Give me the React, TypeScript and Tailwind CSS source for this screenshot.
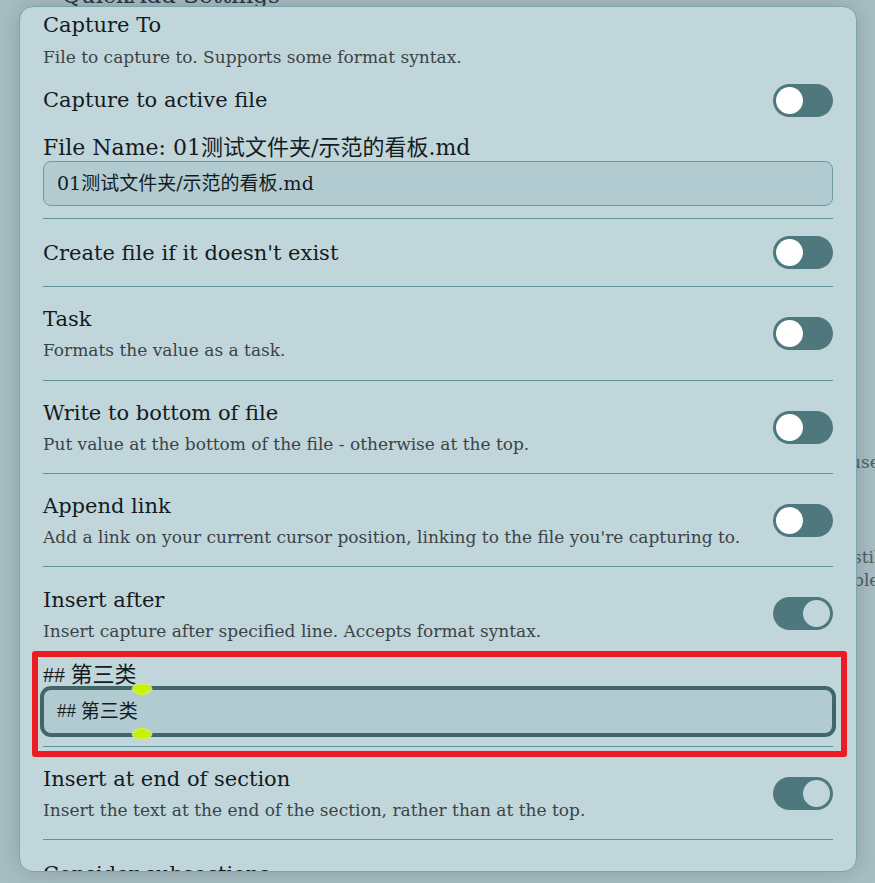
import React from "react";

const serif = "font-['DejaVu_Serif','Noto_Sans_CJK_SC',serif]";
const hashFont = "font-['Liberation_Serif',serif]";

function Toggle({ on }: { on: boolean }) {
  return (
    <div
      className={`w-[60px] h-[33px] shrink-0 rounded-full bg-[#4e787e] flex items-center px-[3px] ${
        on ? "justify-end" : "justify-start"
      }`}
    >
      <div className={`w-[27px] h-[27px] rounded-full ${on ? "bg-[#c1d6db]" : "bg-white"}`} />
    </div>
  );
}

function Info({ name, desc }: { name: string; desc?: string }) {
  return (
    <div className="flex flex-col">
      <div className="text-[21px] leading-[30px] text-[#141b1e]">{name}</div>
      {desc && <div className="mt-[3px] text-[17px] leading-[26px] text-[#3b4346]">{desc}</div>}
    </div>
  );
}

function SettingRow({ name, desc, on, h }: { name: string; desc?: string; on: boolean; h: string }) {
  return (
    <div className={`${h} border-t border-[#5f939c] flex items-center justify-between`}>
      <Info name={name} desc={desc} />
      <Toggle on={on} />
    </div>
  );
}

function Marker({ flip }: { flip?: boolean }) {
  return (
    <svg width="22" height="16" viewBox="0 0 22 16" className={flip ? "rotate-180" : ""}>
      <path d="M11 16 L6.5 10 L15.5 10 Z" fill="#c8f200" />
      <ellipse cx="11" cy="8" rx="10.5" ry="6" fill="#d0f050" opacity="0.9" />
      <ellipse cx="11" cy="8" rx="7.5" ry="4.2" fill="#c6f400" />
    </svg>
  );
}

export default function App() {
  return (
    <div className={`relative w-[875px] h-[883px] overflow-hidden bg-[#a8bec3] ${serif}`}>
      {/* page behind the modal */}
      <div className="pl-[62px] pr-[20px]">
        <div className="mt-[-20px] text-[23px] leading-[30px] text-[#26343a]">QuickAdd Settings</div>
        <div className="mt-[26px] flex flex-col text-[17px] text-[#4f5d61]">
          <div className="h-[91px] border-t border-[#7aa2aa]" />
          <div className="h-[45px] border-t border-[#7aa2aa] bg-[#9cb4b9]" />
          <div className="h-[17px] border-t border-[#7aa2aa]" />
          <div className="h-[94px] border-t border-[#7aa2aa]" />
          <div className="h-[116px] border-t border-[#7aa2aa]" />
          <div className="h-[94px] border-t border-[#7aa2aa] flex items-end pb-[18px] pl-[788px] whitespace-nowrap">
            used
          </div>
          <div className="h-[120px] border-t border-[#7aa2aa] pt-[52px] pl-[791px] leading-[23px] whitespace-nowrap">
            <div>still</div>
            <div>ble</div>
          </div>
        </div>
      </div>

      {/* modal */}
      <div className="absolute left-[19px] top-[6px] w-[838px] h-[866px] rounded-[14px] border border-[#7ba4ac] bg-[#c1d6db] overflow-hidden shadow-[0_0_24px_rgba(40,70,80,0.25)]">
        <div className="px-[23px]">
          <div className="pt-[3px] text-[21px] leading-[30px] text-[#141b1e]">Capture To</div>
          <div className="mt-[4px] text-[17px] leading-[26px] text-[#3b4346]">
            File to capture to. Supports some format syntax.
          </div>
          <div className="mt-[10px] h-[40px] flex items-center justify-between">
            <div className="text-[21px] leading-[30px] text-[#141b1e]">Capture to active file</div>
            <Toggle on={false} />
          </div>
          <div className="mt-[15px] text-[22px] leading-[26px] text-[#141b1e]">File Name: 01测试文件夹/示范的看板.md</div>
          <div className="h-[45px] rounded-[8px] border border-[#6d9ba4] bg-[#b2cbd1] px-[13px] flex items-center text-[19px] text-[#141b1e]">
            01测试文件夹/示范的看板.md
          </div>
          <div className="h-[12px]" />

          <SettingRow h="h-[68px]" name="Create file if it doesn't exist" on={false} />
          <SettingRow h="h-[94px]" name="Task" desc="Formats the value as a task." on={false} />
          <SettingRow
            h="h-[93px]"
            name="Write to bottom of file"
            desc="Put value at the bottom of the file - otherwise at the top."
            on={false}
          />
          <SettingRow
            h="h-[93px]"
            name="Append link"
            desc="Add a link on your current cursor position, linking to the file you're capturing to."
            on={false}
          />

          <div className="border-t border-[#5f939c] pb-[12px]">
            <div className="h-[92px] flex items-center justify-between">
              <div className="mt-[3px]">
                <Info name="Insert after" desc="Insert capture after specified line. Accepts format syntax." />
              </div>
              <Toggle on={true} />
            </div>
            <div className="mt-[3px] text-[22px] leading-[26px] text-[#141b1e]">
              <span className={hashFont}>## </span>第三类
            </div>
            <div className="mt-[1px] h-[45px] rounded-[8px] border border-[#42656a] ring-[3px] ring-[#42656a] bg-[#b2cbd1] px-[13px] flex items-center text-[19px] text-[#141b1e]">
              <span className={hashFont}>##&nbsp;</span>第三类
            </div>
          </div>

          <SettingRow
            h="h-[93px]"
            name="Insert at end of section"
            desc="Insert the text at the end of the section, rather than at the top."
            on={true}
          />
          <SettingRow
            h="h-[98px]"
            name="Consider subsections"
            desc="Also include the section's subsections when inserting."
            on={false}
          />
        </div>
      </div>

      {/* annotation */}
      <div className="absolute left-[32px] top-[651px] w-[815px] h-[106px] border-[6px] border-[#ed1c24] rounded-[3px]" />
      <div className="absolute left-[131px] top-[681px]">
        <Marker />
      </div>
      <div className="absolute left-[131px] top-[726px]">
        <Marker flip />
      </div>
    </div>
  );
}
